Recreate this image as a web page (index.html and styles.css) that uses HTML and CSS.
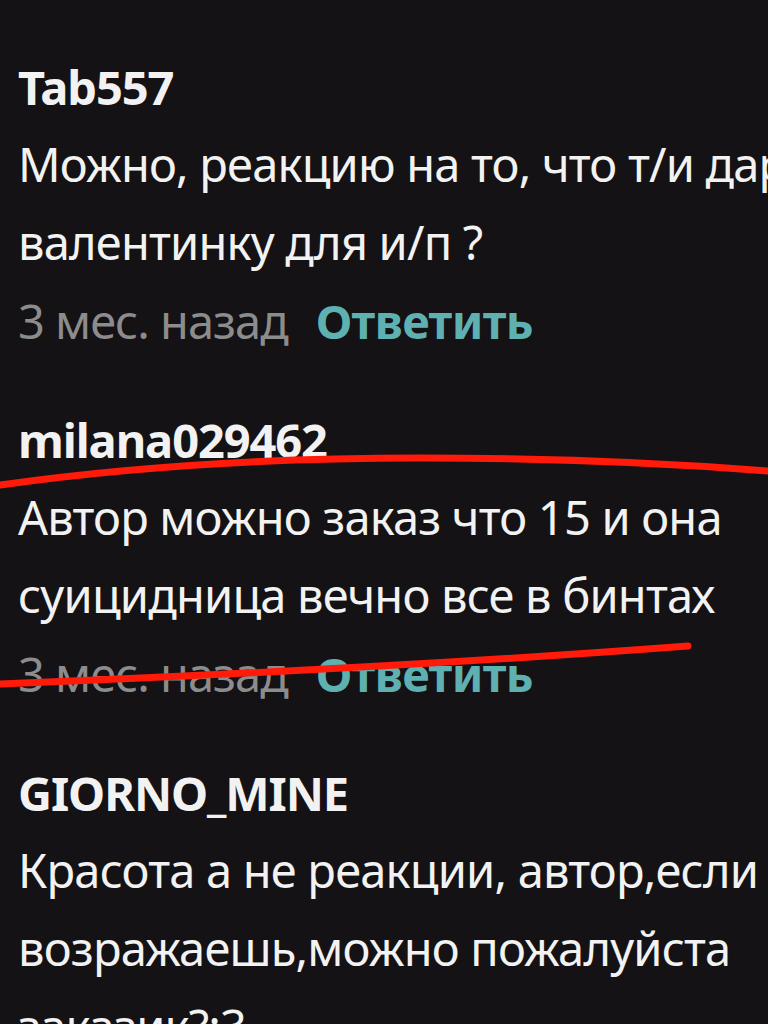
FILE: index.html
```html
<!DOCTYPE html>
<html lang="ru">
<head>
    <meta charset="UTF-8">
    <meta name="viewport" content="width=device-width, initial-scale=1.0">
    <title>Комментарии</title>
    <link rel="stylesheet" href="styles.css">
</head>
<body>
    <div class="comments">
        <div class="comment">
            <div class="author">Tab557</div>
            <div class="text">Можно, реакцию на то, что т/и дарит<br>валентинку для и/п ?</div>
            <div class="meta"><span class="time">3 мес. назад</span><span class="reply">Ответить</span></div>
        </div>

        <div class="comment">
            <div class="author">milana029462</div>
            <div class="text">Автор можно заказ что 15 и она<br>суицидница вечно все в бинтах</div>
            <div class="meta"><span class="time">3 мес. назад</span><span class="reply">Ответить</span></div>
        </div>

        <div class="comment">
            <div class="author">GIORNO_MINE</div>
            <div class="text">Красота а не реакции, автор,если не<br>возражаешь,можно пожалуйста<br>заказик?:3</div>
            <div class="meta"><span class="time">3 мес. назад</span><span class="reply">Ответить</span></div>
        </div>
    </div>

    <!-- red marker strokes drawn over the screenshot -->
    <svg class="scribble" width="768" height="1024" viewBox="0 0 768 1024">
        <path d="M0 485 C 120 468, 260 458, 420 458 C 560 458, 680 464, 768 471" />
        <path d="M0 684 C 200 676, 450 664, 688 646" />
    </svg>
</body>
</html>
```

FILE: styles.css
```css
html, body {
    margin: 0;
    padding: 0;
}
body {
    background: #141215;
    color: #f2f2f2;
    font-family: "Noto Sans", "Open Sans", sans-serif;
    width: 768px;
    height: 1024px;
    overflow: hidden;
    position: relative;
}
.comments {
    padding: 49px 0 0 18px;
}
.comment {
    margin-bottom: 41px;
}
.author {
    font-size: 47px;
    font-weight: 700;
    letter-spacing: -1.1px;
    line-height: 76px;
    white-space: nowrap;
}
.text {
    font-size: 47px;
    letter-spacing: -0.8px;
    line-height: 78px;
    white-space: nowrap;
}
.meta {
    font-size: 47px;
    letter-spacing: -1px;
    line-height: 80px;
    white-space: nowrap;
}
.time {
    color: #8c8c8c;
    margin-right: 28px;
}
.reply {
    color: #5fb0b0;
    font-weight: 700;
    letter-spacing: -0.6px;
}
.scribble {
    position: absolute;
    left: 0;
    top: 0;
}
.scribble path {
    fill: none;
    stroke: #ff1a0a;
    stroke-width: 7;
    stroke-linecap: round;
}
```
